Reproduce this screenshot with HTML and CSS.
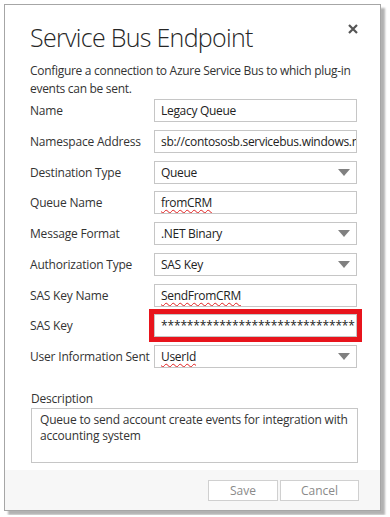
FILE: index.html
```html
<!DOCTYPE html>
<html lang="en">
<head>
    <meta charset="UTF-8">
    <meta name="viewport" content="width=device-width, initial-scale=1.0">
    <title>Service Bus Endpoint</title>
    <link rel="stylesheet" href="styles.css">
</head>
<body>
    <div class="dialog">
        <div class="dialog-body">
            <div class="dialog-header">
                <h1 class="title">Service Bus Endpoint</h1>
                <button class="close-btn" title="Close">
                    <svg width="10" height="10" viewBox="0 0 10 10">
                        <path d="M1 1 L9 9 M9 1 L1 9" stroke="#555" stroke-width="2.2" fill="none"/>
                    </svg>
                </button>
            </div>
            <p class="intro">Configure a connection to Azure Service Bus to which plug-in events can be sent.</p>

            <div class="form-grid">
                <label>Name</label>
                <div class="field">Legacy Queue</div>

                <label>Namespace Address</label>
                <div class="field">sb://contososb.servicebus.windows.net</div>

                <label>Destination Type</label>
                <div class="field select"><span>Queue</span><span class="arrow"></span></div>

                <label>Queue Name</label>
                <div class="field"><span class="misspelled">fromCRM</span></div>

                <label>Message Format</label>
                <div class="field select"><span>.NET Binary</span><span class="arrow"></span></div>

                <label>Authorization Type</label>
                <div class="field select"><span>SAS Key</span><span class="arrow"></span></div>

                <label>SAS Key Name</label>
                <div class="field"><span class="misspelled">SendFromCRM</span></div>

                <label>SAS Key</label>
                <div class="field highlighted">******************************</div>

                <label>User Information Sent</label>
                <div class="field select"><span class="misspelled">UserId</span><span class="arrow"></span></div>
            </div>

            <div class="description">
                <label>Description</label>
                <div class="textarea">Queue to send account create events for integration with accounting system</div>
            </div>
        </div>
        <div class="dialog-footer">
            <button class="btn btn-save">Save</button>
            <button class="btn btn-cancel">Cancel</button>
        </div>
    </div>
</body>
</html>
```

FILE: styles.css
```css
body {
    margin: 0;
    background: #ffffff;
    font-family: 'Open Sans', 'Noto Sans', sans-serif;
    color: #333333;
}
.dialog {
    box-sizing: border-box;
    width: 377px;
    height: 507px;
    margin: 4px;
    border: 1px solid #a6a6a6;
    background: #ffffff;
    box-shadow: 4px 4px 2px rgba(0, 0, 0, 0.3);
    display: flex;
    flex-direction: column;
}
.dialog-body {
    flex: 1;
    padding: 16px 22px 0 25px;
}
.dialog-header {
    display: flex;
    justify-content: space-between;
    align-items: flex-start;
}
.title {
    margin: 0;
    font-size: 25px;
    font-weight: 300;
    line-height: 32px;
    color: #262626;
    letter-spacing: -0.7px;
}
.close-btn {
    border: none;
    background: none;
    padding: 0;
    margin: 3px 0 0 0;
    width: 10px;
    height: 10px;
    cursor: pointer;
}
.close-btn svg {
    display: block;
}
.intro {
    margin: 9px 0 1px 0;
    font-size: 12px;
    line-height: 18px;
    letter-spacing: -0.3px;
}
.form-grid {
    display: grid;
    grid-template-columns: 124px 203px;
    grid-auto-rows: 23px;
    row-gap: 7.75px;
    align-items: center;
}
.form-grid label {
    font-size: 12px;
    letter-spacing: -0.2px;
}
.field {
    box-sizing: border-box;
    height: 23px;
    border: 1px solid #c6c6c6;
    padding: 0 6px 0 6px;
    font-size: 12px;
    line-height: 21px;
    color: #222222;
    white-space: nowrap;
    overflow: hidden;
    letter-spacing: -0.3px;
}
.select {
    display: flex;
    justify-content: space-between;
    align-items: center;
    padding-right: 6px;
}
.arrow {
    width: 0;
    height: 0;
    border-left: 6px solid transparent;
    border-right: 6px solid transparent;
    border-top: 7px solid #808080;
}
.misspelled {
    text-decoration: underline wavy #e02020;
    text-decoration-thickness: 1px;
    text-underline-offset: 2px;
}
.highlighted {
    outline: 5px solid #e8141c;
    letter-spacing: -0.15px;
}
.description {
    margin-top: 22px;
    margin-left: 1px;
}
.description label {
    display: block;
    font-size: 12px;
    line-height: 18px;
    letter-spacing: -0.2px;
}
.textarea {
    box-sizing: border-box;
    width: 327px;
    height: 55px;
    border: 1px solid #c6c6c6;
    padding: 3px 8px;
    font-size: 12px;
    line-height: 16px;
    color: #333333;
    letter-spacing: -0.2px;
}
.dialog-footer {
    height: 40px;
    box-sizing: border-box;
    background: #f7f7f7;
    display: flex;
    justify-content: flex-end;
    align-items: flex-start;
    gap: 2px;
    padding: 10px 21px 0 0;
}
.btn {
    box-sizing: border-box;
    height: 21px;
    border: 1px solid #d0d0d0;
    background: #ffffff;
    color: #8a8a8a;
    font-family: 'Open Sans', 'Noto Sans', sans-serif;
    font-size: 12px;
    padding: 0;
    cursor: pointer;
}
.btn-save {
    width: 70px;
}
.btn-cancel {
    width: 79px;
}
```
